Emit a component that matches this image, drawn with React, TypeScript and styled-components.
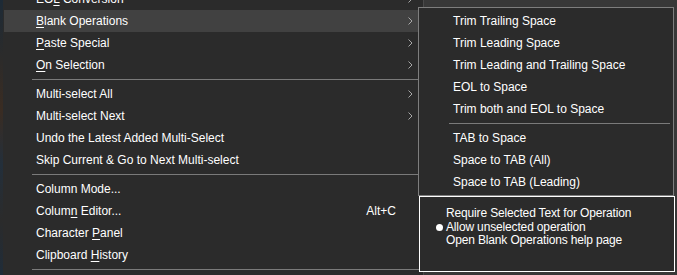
import React from "react";
import styled, { createGlobalStyle } from "styled-components";

const GlobalStyle = createGlobalStyle`
  html, body {
    margin: 0;
    padding: 0;
    width: 677px;
    height: 275px;
    overflow: hidden;
    background: #383838;
  }
  * {
    box-sizing: border-box;
  }
`;

const Stage = styled.div`
  position: relative;
  width: 677px;
  height: 275px;
  overflow: hidden;
  display: flex;
  font-family: "Liberation Sans", Arial, sans-serif;
  font-size: 12px;
  color: #ffffff;
`;

// strip of the editor window peeking out on the left
const BackStrip = styled.div`
  width: 3px;
  height: 100%;
  background: linear-gradient(
    180deg,
    #1d2a36 0%,
    #2b2b2b 20%,
    #3a2c22 40%,
    #232f3b 60%,
    #2b2b2b 80%,
    #1f2c39 100%
  );
`;

const MainMenu = styled.div`
  width: 421px;
  margin-top: -15px;
  height: 310px;
  background: #2b2b2b;
  border-right: 1px solid #4a4a4a;
  padding: 3px 0 0 1px;
  display: flex;
  flex-direction: column;
`;

const Row = styled.div<{ $active?: boolean }>`
  height: 22px;
  display: flex;
  align-items: center;
  padding: 0 10px 0 32px;
  background: ${(p) => (p.$active ? "#414141" : "transparent")};
  white-space: nowrap;
`;

const Label = styled.span`
  flex: 1;
  line-height: 22px;
`;

const Shortcut = styled.span`
  margin-right: 17px;
`;

const Key = styled.span`
  text-decoration: underline;
  text-underline-offset: 2px;
`;

const Separator = styled.div<{ $inset: number }>`
  height: 7px;
  display: flex;
  align-items: center;
  padding-left: ${(p) => p.$inset}px;

  &::after {
    content: "";
    flex: 1;
    height: 1px;
    background: #7a7a7a;
  }
`;

const SubMenu = styled.div`
  position: absolute;
  left: 418px;
  top: 7px;
  width: 256px;
  height: 189px;
  background: #2b2b2b;
  border: 1px solid #7e7e7e;
  padding: 2px 3px 0 0;
  display: flex;
  flex-direction: column;
`;

const SubRow = styled.div`
  height: 22px;
  display: flex;
  align-items: center;
  padding-left: 34px;
  white-space: nowrap;
`;

const HelpBox = styled.div`
  position: absolute;
  left: 419px;
  top: 196px;
  width: 256px;
  height: 76px;
  background: #2b2b2b;
  border: 1px solid #ffffff;
  padding: 10px 0 0 16px;
  display: flex;
  flex-direction: column;
  line-height: 13.5px;
  letter-spacing: -0.15px;
`;

const HelpLine = styled.div`
  display: flex;
  align-items: center;
  white-space: nowrap;
`;

const Bullet = styled.span<{ $on?: boolean }>`
  width: 7px;
  height: 7px;
  margin-right: 3px;
  border-radius: 50%;
  background: ${(p) => (p.$on ? "#ffffff" : "transparent")};
`;

const Arrow = () => (
  <svg width="5" height="8" viewBox="0 0 5 8">
    <polyline
      points="0.5,0.5 4,4 0.5,7.5"
      fill="none"
      stroke="#a8a8a8"
      strokeWidth="1"
    />
  </svg>
);

type Item =
  | { sep: true }
  | {
      sep?: false;
      label: React.ReactNode;
      sub?: boolean;
      shortcut?: string;
      active?: boolean;
    };

const mainItems: Item[] = [
  { label: <>EO<Key>L</Key> Conversion</>, sub: true },
  { label: <><Key>B</Key>lank Operations</>, sub: true, active: true },
  { label: <><Key>P</Key>aste Special</>, sub: true },
  { label: <><Key>O</Key>n Selection</>, sub: true },
  { sep: true },
  { label: "Multi-select All", sub: true },
  { label: "Multi-select Next", sub: true },
  { label: "Undo the Latest Added Multi-Select" },
  { label: "Skip Current & Go to Next Multi-select" },
  { sep: true },
  { label: "Column Mode..." },
  { label: <>Colum<Key>n</Key> Editor...</>, shortcut: "Alt+C" },
  { label: <>Character <Key>P</Key>anel</> },
  { label: <>Clipboard <Key>H</Key>istory</> },
  { sep: true },
  { label: "Read-Only in Notepad++" },
];

const subItems: (string | null)[] = [
  "Trim Trailing Space",
  "Trim Leading Space",
  "Trim Leading and Trailing Space",
  "EOL to Space",
  "Trim both and EOL to Space",
  null,
  "TAB to Space",
  "Space to TAB (All)",
  "Space to TAB (Leading)",
];

const helpLines = [
  { text: "Require Selected Text for Operation", on: false },
  { text: "Allow unselected operation", on: true },
  { text: "Open Blank Operations help page", on: false },
];

export default function App() {
  return (
    <>
      <GlobalStyle />
      <Stage>
        <BackStrip />
        <MainMenu>
          {mainItems.map((item, i) =>
            item.sep ? (
              <Separator key={i} $inset={28} />
            ) : (
              <Row key={i} $active={item.active}>
                <Label>{item.label}</Label>
                {item.shortcut && <Shortcut>{item.shortcut}</Shortcut>}
                {item.sub && <Arrow />}
              </Row>
            ),
          )}
        </MainMenu>

        <SubMenu>
          {subItems.map((s, i) =>
            s === null ? (
              <Separator key={i} $inset={30} />
            ) : (
              <SubRow key={i}>{s}</SubRow>
            ),
          )}
        </SubMenu>

        <HelpBox>
          {helpLines.map((l) => (
            <HelpLine key={l.text}>
              <Bullet $on={l.on} />
              {l.text}
            </HelpLine>
          ))}
        </HelpBox>
      </Stage>
    </>
  );
}
